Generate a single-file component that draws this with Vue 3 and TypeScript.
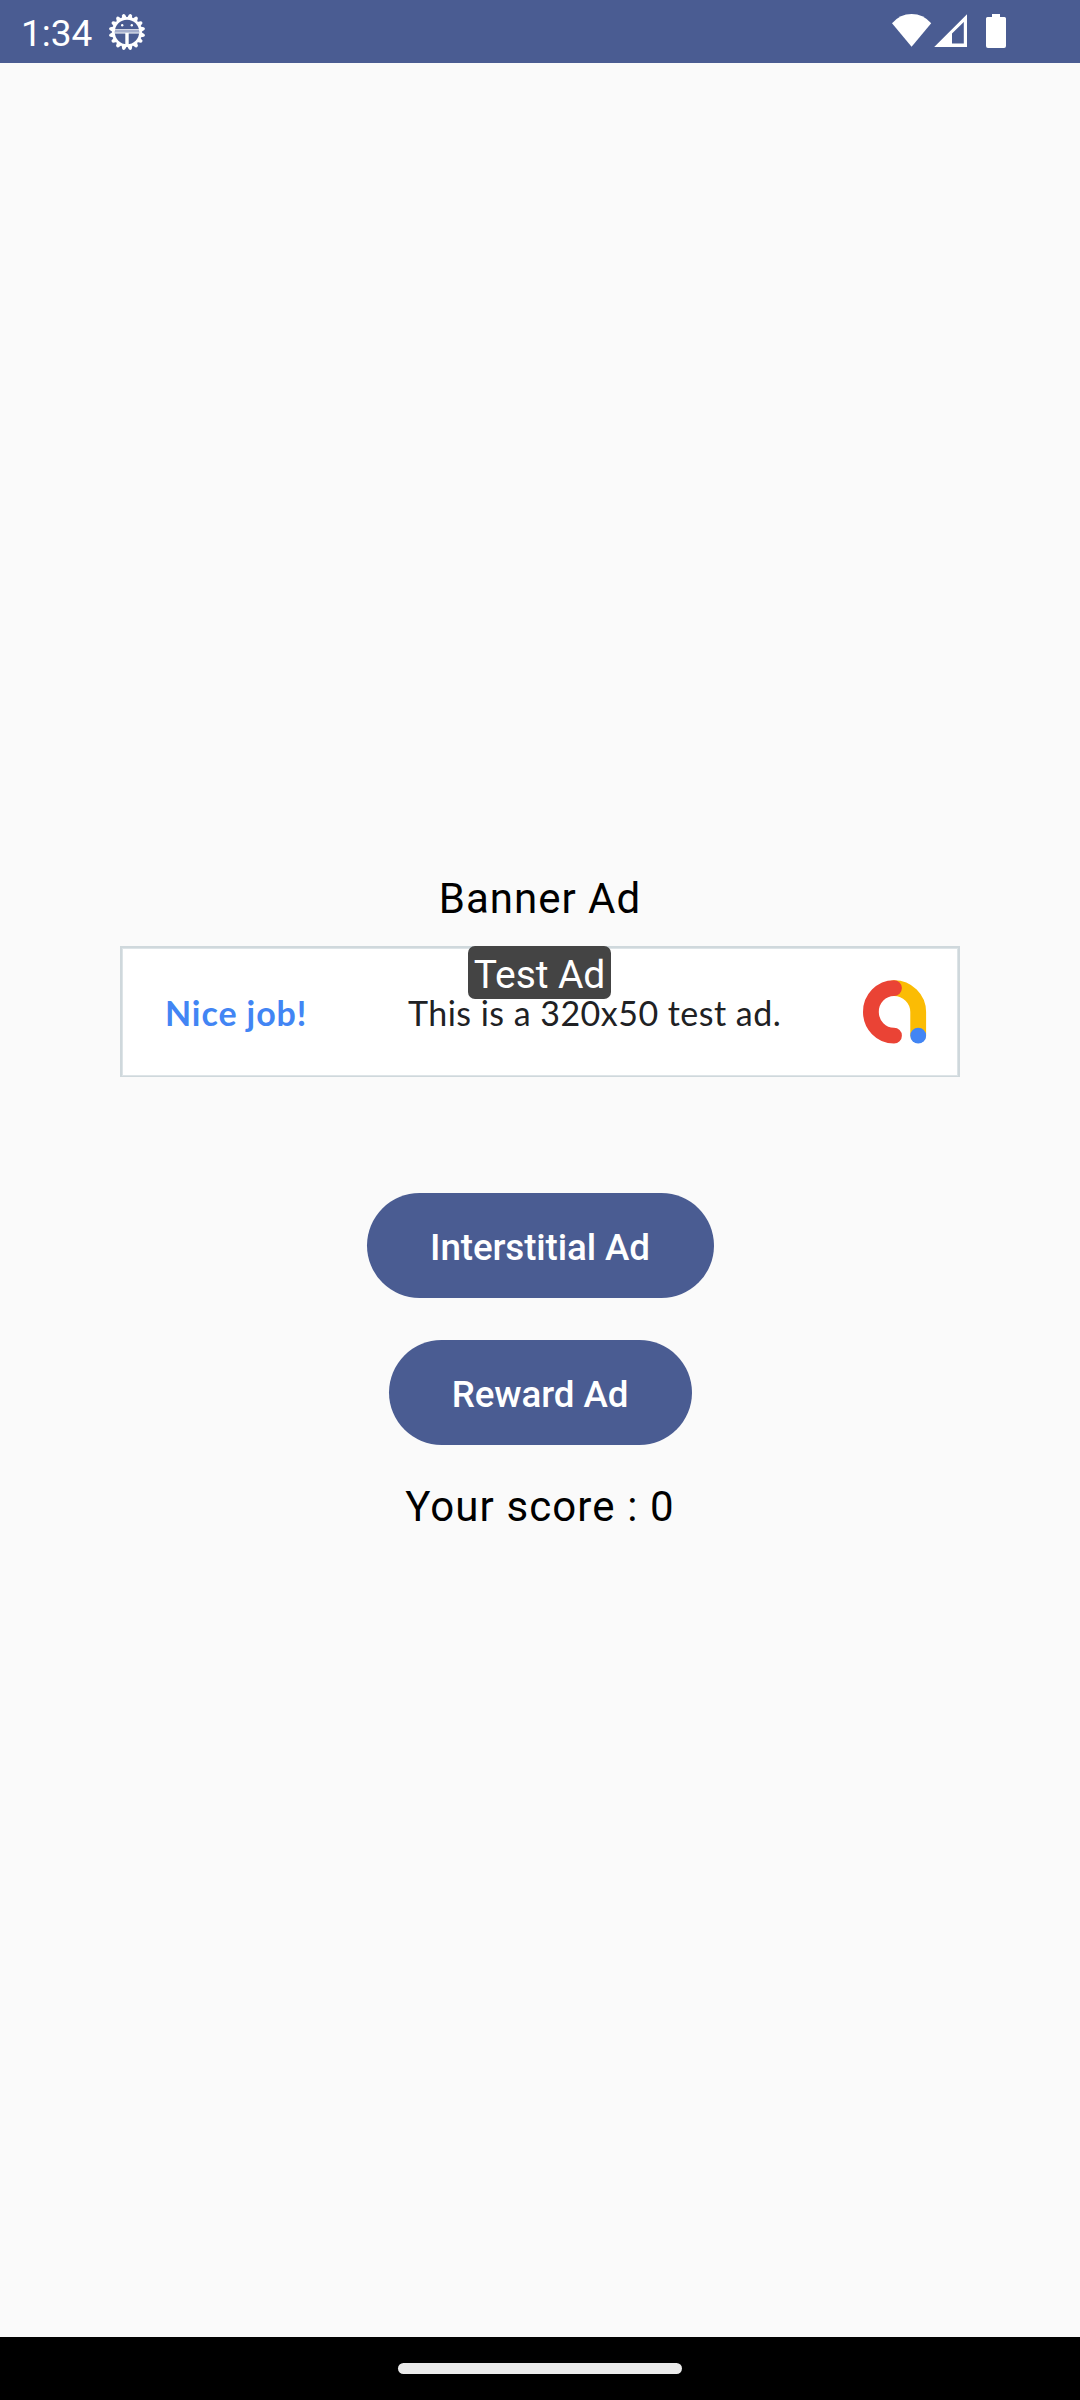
<script setup lang="ts">
import { ref } from 'vue'

const time = '1:34'
const score = ref<number>(0)
const teeth: number[] = Array.from({ length: 16 }, (_, i) => i * 22.5 + 11.25)

function addReward(): void {
  score.value += 1
}
</script>

<template>
  <div class="screen">
    <header class="status">
      <span class="clock">{{ time }}</span>
      <svg class="debug" width="38" height="38" viewBox="-19 -19 38 38">
        <g fill="#fff">
          <path v-for="t in teeth" :key="t" :transform="`rotate(${t})`" d="M-2.700-14L-1.500-17.300Q0-19.200 1.500-17.300L2.700-14Z" />
        </g>
        <circle r="13.6" fill="none" stroke="#fff" stroke-width="2.8" />
        <path d="M-12-2.100H12M-12 .9H12" stroke="#fff" stroke-width="1.200" />
        <path d="M-12-.6H12" stroke="#a3adcc" stroke-width="1.800" />
        <path d="M0 1V13" stroke="#fff" stroke-width="3.400" />
        <circle cx="-4.800" cy="-6.800" r="1.200" fill="#fff" />
        <circle cx="4.800" cy="-6.800" r="1.200" fill="#fff" />
      </svg>
      <svg class="signals" width="116" height="36" viewBox="890 13 116 36" fill="#fff">
        <path d="M892 23.3Q900 14 911.6 14T931.2 23.3L911.6 46.8Z" />
        <path fill-rule="evenodd" d="M934.2 47L967 14.2V47ZM952 33.4V43.6H963.8V22Z" />
        <path d="M992 14h8v3h4.500q1.500 0 1.500 1.500v27.500q0 2-2 2h-16q-2 0-2-2V18.500q0-1.500 1.500-1.500h4.500z" />
      </svg>
    </header>

    <main class="content">
      <p class="label">Banner Ad</p>
      <section class="banner">
        <span class="badge">Test Ad</span>
        <strong class="nice">Nice job!</strong>
        <span class="desc">This is a 320x50 test ad.</span>
        <svg class="logo" width="64" height="64" viewBox="0 0 64 64" fill="none" stroke-width="15.800" stroke-linecap="round">
          <path d="M31 8.100A24.200 23.900 0 0 1 55.200 32V55" stroke="#fbbc04" />
          <path d="M31 8.100A23.100 23.800 0 0 0 31 55.700" stroke="#ea4335" />
          <circle cx="55.200" cy="55.700" r="7.900" fill="#4285f4" />
        </svg>
      </section>
      <button class="btn interstitial" type="button">Interstitial Ad</button>
      <button class="btn reward" type="button" @click="addReward">Reward Ad</button>
      <p class="label score">Your score : {{ score }}</p>
    </main>

    <footer class="nav"><div class="handle"></div></footer>
  </div>
</template>

<style>
body {
  margin: 0;
}
</style>

<style scoped>
.screen {
  width: 1080px;
  height: 2400px;
  display: flex;
  flex-direction: column;
  background: #fafafa;
  font-family: Roboto, sans-serif;
  overflow: hidden;
}
.status {
  height: 63px;
  flex: none;
  display: flex;
  background: #4a5c92;
  color: #fff;
}
.clock {
  width: 72px;
  margin-left: 21px;
  font-size: 37px;
  line-height: 67px;
  white-space: nowrap;
}
.debug {
  margin: 13px 0 0 15px;
}
.signals {
  margin: 13px 74px 0 auto;
}
.content {
  flex: 1;
  display: flex;
  flex-direction: column;
  align-items: center;
  padding-top: 804px;
}
.label {
  margin: 0;
  font-size: 42px;
  line-height: 63px;
  letter-spacing: 1px;
  color: #000;
}
.score {
  letter-spacing: 1.1px;
}
.banner {
  position: relative;
  box-sizing: border-box;
  width: 840px;
  height: 131px;
  margin: 16px 0 116px;
  display: flex;
  align-items: center;
  border: 2px solid #cfd8dc;
  border-bottom-width: 1px;
  box-shadow: inset 0 0 0 1px #dde4e7;
  background: #fff;
  font-family: Lato, sans-serif;
  white-space: nowrap;
}
.badge {
  position: absolute;
  top: -2px;
  left: 346px;
  width: 143px;
  height: 53px;
  border-radius: 7px;
  background: #444;
  color: #fff;
  font: 39px/58px Roboto, sans-serif;
  letter-spacing: -0.1px;
  text-align: center;
}
.nice {
  width: 243px;
  margin-left: 43px;
  font-size: 34px;
  font-weight: 700;
  letter-spacing: 0.9px;
  color: #4285f4;
}
.desc {
  font-size: 34px;
  letter-spacing: 0.47px;
  color: #202124;
}
.logo {
  margin: 0 31px 0 auto;
}
.btn {
  height: 105px;
  border: 0;
  border-radius: 53px;
  padding: 3px 0 0;
  background: #4a5c92;
  color: #fff;
  font: 500 36.75px Roboto, sans-serif;
  letter-spacing: -0.1px;
}
.interstitial {
  width: 347px;
  margin-bottom: 42px;
}
.reward {
  width: 303px;
  margin-bottom: 30px;
}
.nav {
  height: 63px;
  flex: none;
  background: #000;
}
.handle {
  width: 284px;
  height: 11px;
  margin: 26px auto 0;
  border-radius: 6px;
  background: #ebebeb;
}
</style>
